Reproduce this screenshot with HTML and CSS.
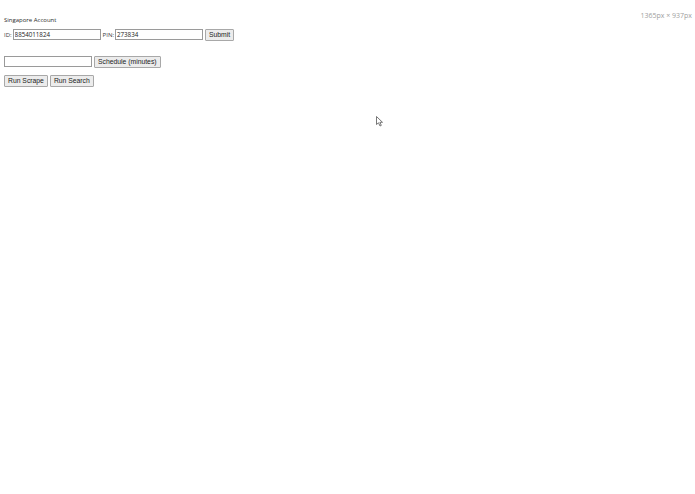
FILE: index.html
```html
<!DOCTYPE html>
<html>
<head>
<meta charset="utf-8">
<link rel="stylesheet" href="styles.css">
</head>
<body>
<div class="size-tag">1365px × 937px</div>
<div class="page">
  <div class="title">Singapore Account</div>
  <div class="row row-login">
    <span class="label">ID:</span>
    <input class="field" type="text" value="8854011824">
    <span class="label">PIN:</span>
    <input class="field" type="text" value="273834">
    <button class="btn btn-submit">Submit</button>
  </div>
  <div class="row row-schedule">
    <input class="field" type="text" value="">
    <button class="btn">Schedule (minutes)</button>
  </div>
  <div class="row row-actions">
    <button class="btn">Run Scrape</button>
    <button class="btn">Run Search</button>
  </div>
</div>
<svg class="cursor" width="8" height="11" viewBox="0 0 8 11">
  <path d="M0.5 0.5 L0.5 8.5 L2.5 6.8 L4 10 L5.3 9.4 L3.9 6.3 L6.5 6.3 Z" fill="#fff" stroke="#555" stroke-width="0.8" stroke-linejoin="round"/>
</svg>
</body>
</html>
```

FILE: styles.css
```css
html, body {
  margin: 0;
  padding: 0;
  background: #ffffff;
}
body {
  font-family: "Open Sans", "Liberation Sans", sans-serif;
  font-size: 6px;
  color: #2a2a2a;
  position: relative;
  min-height: 494px;
}
.page {
  padding: 16px 4px 0 4px;
  display: flex;
  flex-direction: column;
}
.title {
  line-height: 8px;
  height: 8px;
}
.row {
  display: flex;
  align-items: center;
}
.row-login {
  margin-top: 5px;
  height: 11px;
}
.row-schedule {
  margin-top: 16px;
  height: 11px;
}
.row-actions {
  margin-top: 8px;
  height: 12px;
}
.label {
  margin-right: 1px;
  color: #3a3a3a;
}
.field {
  box-sizing: border-box;
  width: 88px;
  height: 11px;
  margin: 0 2px 0 0;
  padding: 0 1px;
  border: 1px solid #9a9a9a;
  font-family: "Open Sans", "Liberation Sans", sans-serif;
  font-size: 6.2px;
  color: #222;
  background: #fff;
  outline: none;
}
.btn {
  box-sizing: border-box;
  height: 12px;
  margin: 0 2px 0 0;
  padding: 0 3px;
  border: 1px solid #a8a8a8;
  border-radius: 1px;
  background: #ececec;
  font-family: "Liberation Sans", Arial, sans-serif;
  font-size: 6.8px;
  color: #222;
  line-height: 10px;
}
.btn-submit {
  margin-left: 0;
}
.size-tag {
  position: absolute;
  top: 11px;
  right: 3px;
  font-size: 7px;
  color: #a0a0a0;
}
.cursor {
  position: absolute;
  left: 376px;
  top: 116px;
}
```
